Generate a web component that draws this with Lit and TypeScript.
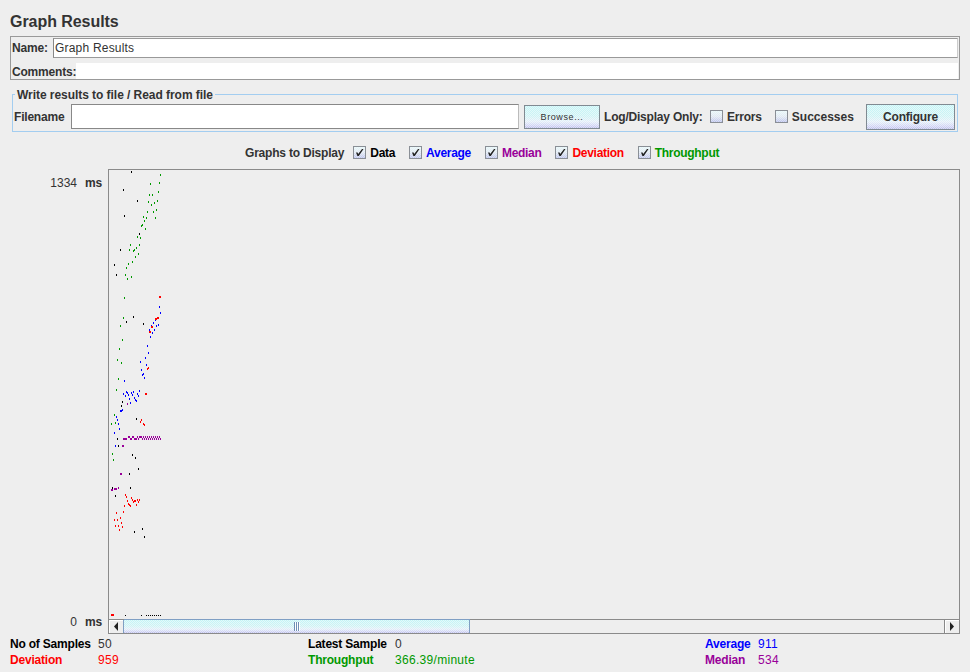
// Graph Results panel, drawn after the JMeter listener window.
import { LitElement, html, css, svg } from "lit";
import { customElement } from "lit/decorators.js";

// --- plot samples (page x, page y of the dot centre) --------------------

type Pt = [number, number];

const PLOT_X = 109;
const PLOT_Y = 171; // dots are 2px tall, so y is one above their centre

const BLACK: Pt[] = [
  [131, 172], [123, 190], [137, 201], [124, 216], [139, 234], [120, 250], [114, 265], [116, 275],
  [133, 317], [126, 322], [143, 324], [122, 402], [127, 404], [121, 406], [136, 419], [117, 439],
  [118, 446], [132, 455], [135, 458], [138, 469], [129, 474], [130, 488], [112, 488], [115, 496],
  [142, 529], [134, 532], [144, 537],
];

const GREEN: Pt[] = [
  [160, 175], [150, 184], [159, 183], [158, 192], [149, 195], [152, 195], [148, 202], [157, 201],
  [154, 203], [151, 205], [147, 212], [156, 210], [153, 212], [143, 217], [146, 218], [155, 218],
  [144, 221], [142, 225], [141, 226], [145, 229], [137, 237], [140, 238], [139, 245], [130, 245],
  [129, 250], [136, 248], [134, 250], [133, 251], [138, 254], [135, 257], [132, 262], [128, 264],
  [126, 268], [125, 275], [131, 277], [127, 279], [124, 298], [123, 318], [120, 326], [122, 340],
  [119, 349], [117, 360], [121, 363], [118, 379], [116, 390], [114, 415], [115, 423], [111, 424],
  [112, 454], [113, 460],
];

const BLUE: Pt[] = [
  [159, 307], [160, 313], [155, 320], [153, 323], [158, 325], [156, 326], [151, 326], [149, 330],
  [154, 330], [152, 333], [150, 337], [147, 346], [148, 353], [145, 358], [140, 362], [146, 365],
  [141, 370], [143, 374], [142, 375], [144, 378], [124, 381], [139, 391], [126, 392], [127, 393],
  [131, 393], [133, 392], [123, 394], [137, 394], [128, 395], [125, 396], [132, 395], [138, 396],
  [129, 399], [134, 398], [135, 400], [136, 401], [130, 403], [122, 410], [120, 411], [121, 411],
  [116, 417], [117, 420], [118, 424], [119, 429], [114, 433], [115, 446],
];

const RED: Pt[] = [
  [159, 297], [160, 297], [158, 318], [157, 318], [156, 319], [155, 319], [152, 327], [151, 327],
  [150, 332], [149, 332], [148, 368], [147, 369], [145, 394], [146, 394], [141, 420], [140, 422],
  [143, 424], [144, 425], [125, 495], [126, 497], [131, 498], [132, 500], [127, 501], [133, 502],
  [135, 501], [134, 501], [137, 500], [139, 500], [138, 502], [128, 504], [129, 505], [130, 506],
  [136, 505], [124, 506], [123, 512], [116, 513], [120, 518], [114, 520], [117, 520], [121, 523],
  [115, 526], [118, 526], [122, 527], [119, 530],
  [111, 615], [112, 615], [113, 615],
];

const PURPLE: Pt[] = [
  ...[128, 129, 132, 133, 137, 139, 140, 141, 143, 145, 147, 149, 151, 153, 155, 157, 159].map((x): Pt => [x, 437]),
  ...[123, 124, 125, 126, 130, 131, 134, 135, 136, 138, 142, 144, 146, 148, 150, 152, 154, 156, 158, 160].map((x): Pt => [x, 439]),
  [122, 446], [123, 446], [120, 474], [121, 474], [118, 488], [114, 489], [115, 489], [116, 489],
  [112, 490], [111, 490], [127, 404],
];

// the row of samples lying on the zero line is only 1px tall
const FLOOR: number[] = [125, 141, 146, 148, 150, 152, 154, 156, 158, 160];

const SERIES: [string, Pt[]][] = [
  ["#000000", BLACK],
  ["#009900", GREEN],
  ["#0000ff", BLUE],
  ["#ff0000", RED],
  ["#990099", PURPLE],
];

const LEGEND = [
  { label: "Data", color: "#000000" },
  { label: "Average", color: "#0000ff" },
  { label: "Median", color: "#990099" },
  { label: "Deviation", color: "#ff0000" },
  { label: "Throughput", color: "#009900" },
];

const check = (on: boolean) => html`
  <span class="box">
    ${on
      ? html`<svg width="9" height="9" viewBox="0 0 9 9">
          <path d="M1 4.5 L2.6 4.5 L3.2 6 L7 1 L8.5 1 L3.8 8 L2.4 8 Z" fill="#222"></path>
        </svg>`
      : ""}
  </span>
`;

@customElement("app-root")
export class AppRoot extends LitElement {
  static styles = css`
    :host {
      display: block;
      width: 970px;
      height: 672px;
      overflow: hidden;
      background: #eeeeee;
      color: #333333;
      font: bold 12px "Liberation Sans", Arial, sans-serif;
      letter-spacing: -0.2px;
    }
    .title {
      height: 36px;
      padding: 13px 0 0 10px;
      box-sizing: border-box;
      font-size: 16px;
      letter-spacing: -0.05px;
      line-height: 18px;
    }
    .names {
      width: 950px;
      height: 44px;
      margin-left: 10px;
      box-sizing: border-box;
      border: 1px solid #999999;
      display: grid;
      grid-template-rows: 21px 1fr;
    }
    .row {
      display: flex;
      align-items: center;
      padding-left: 1px;
    }
    .row.first label {
      width: 41px;
      flex: none;
    }
    .row.second {
      padding-top: 5px;
    }
    .row.second label {
      padding-top: 2px;
    }
    .name-input {
      margin: 1px 1px 0 0;
      flex: 1;
      height: 20px;
      box-sizing: border-box;
      background: #fff;
      border: 1px solid #999999;
      border-left-color: #888888;
      border-right-color: #cccccc;
      padding-left: 1px;
      font-weight: normal;
      letter-spacing: 0.2px;
      line-height: 19px;
    }
    .comment-input {
      margin-right: 1px;
      flex: 1;
      align-self: stretch;
      background: #fff;
    }
    fieldset {
      all: unset;
      display: block;
      position: relative;
      width: 946px;
      height: 38px;
      margin: 14px 0 0 12px;
      box-sizing: border-box;
      border: 1px solid #a3cdf0;
    }
    .legend {
      position: absolute;
      left: 2px;
      top: -7px;
      padding: 0 2px;
      background: #eeeeee;
      line-height: 15px;
      letter-spacing: -0.05px;
    }
    .file {
      height: 36px;
      box-sizing: border-box;
      padding: 7px 0 0 1px;
      display: flex;
      align-items: center;
      white-space: nowrap;
    }
    .file > .label {
      width: 51px;
      flex: none;
    }
    .file-input {
      width: 448px;
      height: 25px;
      flex: none;
      margin: 0 5px 0 6px;
      box-sizing: border-box;
      background: #fff;
      border: 1px solid #888888;
      border-right-color: #bbbbbb;
    }
    .metal {
      background: repeating-conic-gradient(rgba(255, 255, 255, 0.5) 0 25%, transparent 0 50%) 0 0 / 2px 2px,
        linear-gradient(180deg, #c4f4f6 0%, #ccf2f4 45%, #e2eef8 70%, #cdd0f4 90%, #b8bce8 100%);
    }
    button {
      all: unset;
      box-sizing: border-box;
      flex: none;
      display: flex;
      align-items: center;
      justify-content: center;
      border: 1px solid #808a92;
    }
    .browse {
      width: 76px;
      height: 24px;
      font-size: 9px;
      font-weight: normal;
      letter-spacing: 0.6px;
    }
    .only {
      width: 97px;
      flex: none;
      margin-left: 4px;
    }
    .box {
      flex: none;
      width: 13px;
      height: 13px;
      box-sizing: border-box;
      display: inline-flex;
      align-items: center;
      justify-content: center;
      border: 1px solid #8a8f96;
      background: repeating-conic-gradient(rgba(255, 255, 255, 0.4) 0 25%, transparent 0 50%) 0 0 / 2px 2px,
        linear-gradient(180deg, #e6f6f8 0%, #dfe8f2 50%, #bcc3ec 100%);
    }
    .opt {
      display: inline-flex;
      align-items: center;
      gap: 4px;
    }
    .opt.errors {
      margin-left: 9px;
    }
    .opt.successes {
      margin-left: 13px;
      letter-spacing: 0;
    }
    .configure {
      width: 89px;
      height: 26px;
      margin: 0 2px 0 auto;
    }
    .legend-row {
      height: 37px;
      display: flex;
      align-items: center;
      padding: 4px 0 0 245px;
      gap: 14px;
      box-sizing: border-box;
    }
    .legend-row .caption {
      margin-right: -5px;
    }
    .legend-row .opt {
      letter-spacing: -0.3px;
    }
    .graph {
      display: flex;
      height: 465px;
    }
    .axis {
      width: 102px;
      flex: none;
      box-sizing: border-box;
      height: 460px;
      padding-top: 7px;
      display: flex;
      flex-direction: column;
      justify-content: space-between;
      align-items: flex-end;
    }
    .axis span {
      line-height: 14px;
      display: flex;
      gap: 8px;
    }
    .axis b {
      font-weight: normal;
      letter-spacing: 0;
    }
    .plot {
      width: 852px;
      flex: none;
      margin-left: 6px;
      box-sizing: border-box;
      border: 1px solid #8a8a8a;
      border-bottom: none;
      display: flex;
      flex-direction: column;
    }
    .plot svg.dots {
      display: block;
      flex: none;
    }
    .scroll {
      height: 15px;
      flex: none;
      box-sizing: border-box;
      border-top: 1px solid #8a8a8a;
      border-bottom: 1px solid #8a8a8a;
      display: flex;
      background: #eeeeee;
    }
    .arrow {
      width: 15px;
      flex: none;
      display: flex;
      align-items: center;
      justify-content: center;
      box-sizing: border-box;
    }
    .arrow.left {
      border-right: 1px solid #7f9fc4;
      box-shadow: inset 1px 1px 0 #ffffff;
    }
    .arrow.right {
      margin-left: auto;
      border-left: 1px solid #888888;
      box-shadow: inset 1px 1px 0 #ffffff;
    }
    .thumb {
      width: 346px;
      flex: none;
      height: 14px;
      margin-top: -1px;
      box-sizing: border-box;
      border-right: 1px solid #7f9fc4;
      border-top: 1px solid #7f9fc4;
      display: flex;
      align-items: center;
      justify-content: center;
      gap: 1px;
    }
    .thumb i {
      width: 1px;
      height: 9px;
      background: #6f8fb5;
      box-shadow: 1px 0 0 #ffffff;
    }
    .stats {
      display: grid;
      grid-template-columns: 88px 210px 87px 310px 53px 1fr;
      grid-auto-rows: 16px;
      padding: 2px 0 0 10px;
      line-height: 16px;
      color: #000000;
    }
    .stats .v {
      font-weight: normal;
      letter-spacing: 0.3px;
      color: #333333;
    }
    .stats .red { color: #ff0000; }
    .stats .green { color: #009900; }
    .stats .blue { color: #0000ff; }
    .stats .purple { color: #990099; }
  `;

  private renderDots() {
    const w = 850;
    const h = 449;
    return html`
      <svg class="dots" width=${w} height=${h} viewBox="0 0 ${w} ${h}" shape-rendering="crispEdges">
        ${SERIES.map(([color, pts]) =>
          pts.map(
            ([x, y]) => svg`<rect x=${x - PLOT_X} y=${y - PLOT_Y} width="1" height="2" fill=${color}></rect>`,
          ),
        )}
        ${FLOOR.map((x) => svg`<rect x=${x - PLOT_X} y=${615 - 170} width="1" height="1" fill="#000000"></rect>`)}
      </svg>
    `;
  }

  render() {
    return html`
      <div class="title">Graph Results</div>

      <div class="names">
        <div class="row first">
          <label>Name:</label>
          <div class="name-input">Graph Results</div>
        </div>
        <div class="row second">
          <label>Comments:</label>
          <div class="comment-input"></div>
        </div>
      </div>

      <fieldset>
        <span class="legend">Write results to file / Read from file</span>
        <div class="file">
          <span class="label">Filename</span>
          <div class="file-input"></div>
          <button class="metal browse">Browse...</button>
          <span class="only">Log/Display Only:</span>
          <span class="opt errors">${check(false)}Errors</span>
          <span class="opt successes">${check(false)}Successes</span>
          <button class="metal configure">Configure</button>
        </div>
      </fieldset>

      <div class="legend-row">
        <span class="caption">Graphs to Display</span>
        ${LEGEND.map(
          (l) => html`<span class="opt" style="color:${l.color}">${check(true)}${l.label}</span>`,
        )}
      </div>

      <div class="graph">
        <div class="axis">
          <span><b>1334</b>ms</span>
          <span><b>0</b>ms</span>
        </div>
        <div class="plot">
          ${this.renderDots()}
          <div class="scroll">
            <div class="arrow left">
              <svg width="5" height="9" viewBox="0 0 5 9"><path d="M4 0 V9 L0 4.5 Z" fill="#222"></path></svg>
            </div>
            <div class="thumb metal"><i></i><i></i><i></i></div>
            <div class="arrow right">
              <svg width="5" height="9" viewBox="0 0 5 9"><path d="M0 0 V9 L4 4.5 Z" fill="#222"></path></svg>
            </div>
          </div>
        </div>
      </div>

      <div class="stats">
        <span>No of Samples</span><span class="v">50</span>
        <span>Latest Sample</span><span class="v">0</span>
        <span class="blue">Average</span><span class="v blue">911</span>
        <span class="red">Deviation</span><span class="v red">959</span>
        <span class="green">Throughput</span><span class="v green">366.39/minute</span>
        <span class="purple">Median</span><span class="v purple">534</span>
      </div>
    `;
  }
}
